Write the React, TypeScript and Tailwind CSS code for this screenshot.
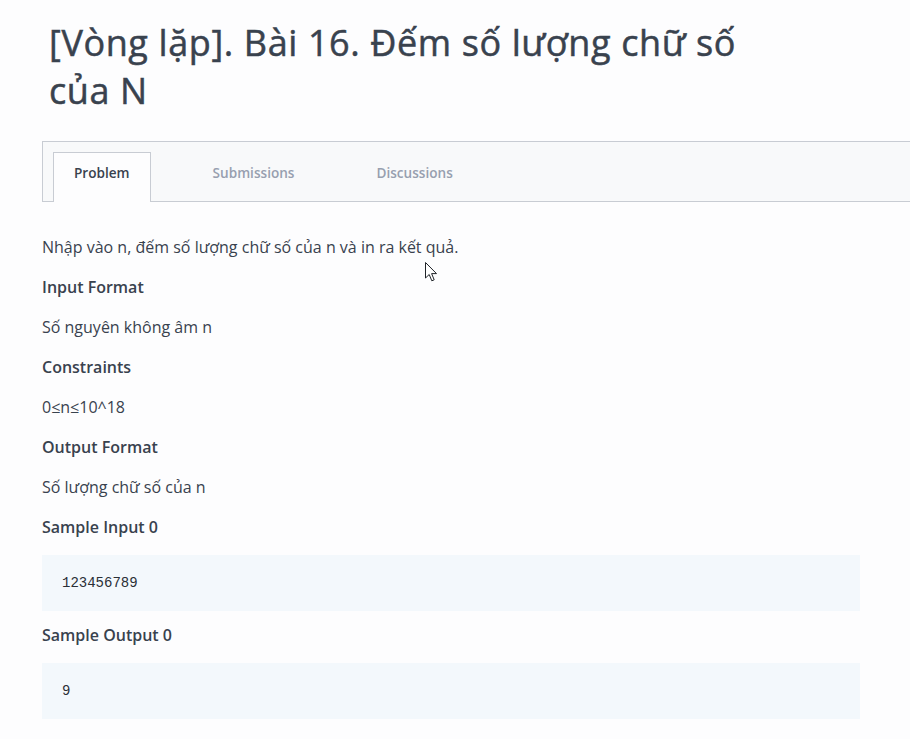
import { useState } from 'react';

const tabs = ['Problem', 'Submissions', 'Discussions'];

const sections = [
  { title: 'Input Format', body: 'Số nguyên không âm n' },
  { title: 'Constraints', body: '0≤n≤10^18' },
  { title: 'Output Format', body: 'Số lượng chữ số của n' },
];

function Cursor() {
  return (
    <svg
      className="absolute left-[425px] top-[262px] pointer-events-none"
      width="14"
      height="21"
      viewBox="0 0 14 21"
    >
      <path
        d="M0.5 0.5 L0.5 16 L4.2 12.5 L6.8 18.8 L9.2 17.8 L6.6 11.6 L11.5 11.6 Z"
        fill="#ffffff"
        stroke="#1f2328"
        strokeWidth="1"
        strokeLinejoin="round"
      />
    </svg>
  );
}

export default function App() {
  const [active, setActive] = useState('Problem');

  return (
    <div className="relative min-h-screen bg-[#fdfdfe] font-['Open_Sans',sans-serif] text-[#39424e] overflow-hidden">
      <div className="pl-[42px] pt-[19px]">
        <h1 className="pl-[7px] w-[740px] text-[36px] leading-[48px] font-normal tracking-[0.6px] [-webkit-text-stroke:0.5px_#39424e]">
          [Vòng lặp]. Bài 16. Đếm số lượng chữ số của N
        </h1>

        <div className="mt-[26px] flex items-end gap-[42px] h-[61px] pl-[10px] border border-r-0 border-[#c8ccd3] bg-[#f8f9fa]">
          {tabs.map((tab) =>
            tab === active ? (
              <button
                key={tab}
                onClick={() => setActive(tab)}
                className="relative -mb-px h-[50px] px-5 pb-[10px] border border-b-0 border-[#c8ccd3] bg-[#fdfdfe] text-[13.6px] leading-5 font-semibold text-[#39424e]"
              >
                {tab}
              </button>
            ) : (
              <button
                key={tab}
                onClick={() => setActive(tab)}
                className="h-[50px] px-5 pb-[6px] text-[13.6px] leading-5 font-semibold text-[#979faf]"
              >
                {tab}
              </button>
            )
          )}
        </div>

        <div className="pt-[33px] w-[818px] text-[16px] leading-6">
          <p className="mb-4">Nhập vào n, đếm số lượng chữ số của n và in ra kết quả.</p>
          {sections.map((s) => (
            <div key={s.title}>
              <h3 className="mb-4 font-semibold">{s.title}</h3>
              <p className="mb-4">{s.body}</p>
            </div>
          ))}
          <h3 className="mb-4 font-semibold">Sample Input 0</h3>
          <pre className="h-[56px] flex items-center pl-5 bg-[#f3f8fc] font-['Liberation_Mono',monospace] text-[14px] text-[#2a2f36]">
            123456789
          </pre>
          <h3 className="mt-3 mb-4 font-semibold">Sample Output 0</h3>
          <pre className="h-[56px] flex items-center pl-5 bg-[#f3f8fc] font-['Liberation_Mono',monospace] text-[14px] text-[#2a2f36]">
            9
          </pre>
        </div>
      </div>
      <Cursor />
    </div>
  );
}
